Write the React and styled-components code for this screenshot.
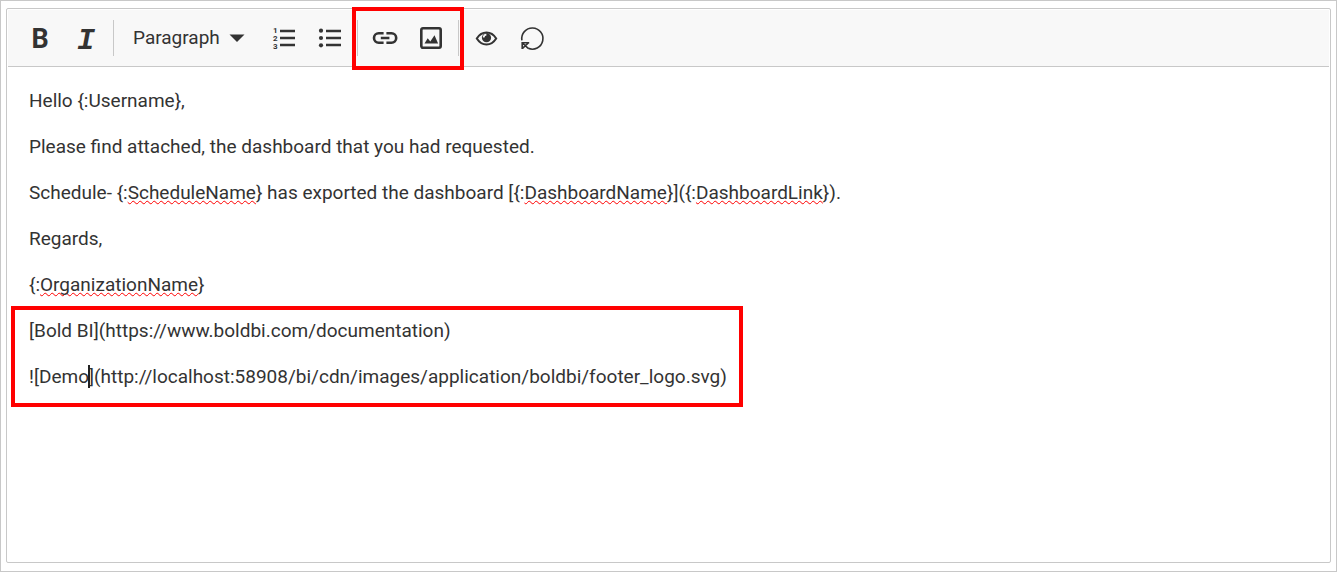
import React from "react";
import styled, { createGlobalStyle } from "styled-components";

const INK = "#333333";
const LINE = "#c8c8c8";

const GlobalStyle = createGlobalStyle`
  *, *::before, *::after { box-sizing: border-box; }
  body {
    margin: 0;
    background: #ffffff;
    color: ${INK};
    font: 19px/28px Roboto, "Liberation Sans", sans-serif;
  }
`;

const Page = styled.main`
  display: flex;
  min-height: 100vh;
  padding: 7px 5px 8px;
  border: 1px solid ${LINE};
`;

const Editor = styled.section`
  flex: 1;
  display: flex;
  flex-direction: column;
  min-width: 0;
  padding: 1px;
  border: 1px solid ${LINE};
  border-radius: 2px;
`;

const Toolbar = styled.div`
  display: flex;
  align-items: center;
  height: 57px;
  padding: 0 9px;
  background: #f8f8f8;
  border-bottom: 1px solid ${LINE};
`;

const ToolButton = styled.button`
  display: flex;
  align-items: center;
  justify-content: center;
  width: 46px;
  height: 46px;
  padding: 0;
  border: 0;
  background: transparent;
  color: ${INK};
  cursor: pointer;
`;

const Glyph = styled.span`
  padding-top: ${(p) => (p.$italic ? "5px" : "2px")};
  font: ${(p) =>
    p.$italic
      ? 'italic bold 30px/28px "Liberation Mono", monospace'
      : "bold 27px/28px Roboto, sans-serif"};
`;

const Separator = styled.span`
  flex: none;
  width: 1px;
  height: 36px;
  margin: 0 4px;
  background: ${LINE};
`;

const FormatField = styled.label`
  position: relative;
  display: flex;
  align-items: center;
  width: 143px;
  height: 46px;
`;

const FormatSelect = styled.select`
  appearance: none;
  width: 100%;
  height: 100%;
  padding: 0 0 0 15px;
  border: 0;
  background: transparent;
  color: ${INK};
  font: inherit;
`;

const SelectArrow = styled.svg`
  position: absolute;
  right: 16px;
  pointer-events: none;
`;

const Marked = styled.div`
  position: relative;
  display: flex;
  flex-direction: ${(p) => (p.$column ? "column" : "row")};
  gap: ${(p) => (p.$column ? "18px" : "0")};
  width: fit-content;

  &::after {
    content: "";
    position: absolute;
    inset: ${(p) => p.$outset};
    border: 4px solid #ff0000;
    pointer-events: none;
  }
`;

const Body = styled.div`
  flex: 1;
  display: flex;
  flex-direction: column;
  gap: 18px;
  padding: 20px 21px;
  outline: none;
`;

const Line = styled.p`
  margin: 0;
`;

const Misspelled = styled.span`
  text-decoration: underline wavy #ff0000 1px;
  text-decoration-skip-ink: none;
  text-underline-offset: 1px;
`;

const Caret = styled.span`
  position: relative;

  &::after {
    content: "";
    position: absolute;
    top: 0;
    left: -1px;
    width: 2px;
    height: 23px;
    background: #222222;
  }
`;

const Icon = ({ children, size = 28 }) => (
  <svg width={size} height={size} viewBox={`0 0 ${size} ${size}`} fill="none" stroke="currentColor" aria-hidden="true">
    {children}
  </svg>
);

const NumberedIcon = () => (
  <Icon>
    <path d="M10 7h15M10 14h15M10 21h15" strokeWidth="2.4" />
    <g fill="currentColor" stroke="none" fontFamily="Roboto, sans-serif" fontSize="8" fontWeight="bold">
      <text x="3" y="9">1</text>
      <text x="3" y="17">2</text>
      <text x="3" y="25">3</text>
    </g>
  </Icon>
);

const BulletIcon = () => (
  <Icon>
    <path d="M10 7h15M10 14h15M10 21h15" strokeWidth="2.4" />
    <g fill="currentColor" stroke="none">
      <circle cx="5" cy="6.7" r="2.1" />
      <circle cx="5" cy="14" r="2.1" />
      <circle cx="5" cy="21.3" r="2.1" />
    </g>
  </Icon>
);

const LinkIcon = () => (
  <Icon>
    <path d="M12.6 9.3H7.7a4.7 4.7 0 0 0 0 9.4h4.9M15.4 9.3h5.1a4.7 4.7 0 0 1 0 9.4h-5.1M9.8 14h8.6" strokeWidth="2.6" />
  </Icon>
);

const ImageIcon = () => (
  <Icon>
    <rect x="4.3" y="4.3" width="19.4" height="19.4" rx="1.6" strokeWidth="2.6" />
    <path d="M7.5 19.5l3.2-5.2 2.6 3.1 4.200-6.200 3.600 8.300z" fill="currentColor" stroke="none" />
  </Icon>
);

const EyeIcon = () => (
  <Icon>
    <path d="M4.8 14.5C7.3 10.5 10.7 8.5 14.5 8.5s7.200 2 9.700 6c-2.500 4-5.900 6-9.700 6s-7.200-2-9.700-6z" strokeWidth="2" />
    <circle cx="14.500" cy="13.700" r="4.600" fill="currentColor" stroke="none" />
    <path d="M11.700 13.600a2.900 2.900 0 0 1 2.700-2.900" stroke="#f8f8f8" strokeWidth="1.700" />
  </Icon>
);

const RefreshIcon = () => (
  <Icon>
    <path d="M3.900 16.300A10.600 10.600 0 1 1 10.200 24.300" strokeWidth="1.600" />
    <path d="M4.200 25v-6.300h7M4.500 19l5.700 5.300M4.500 24.400l5.800-5.400" strokeWidth="1.600" />
  </Icon>
);

export default function App() {
  return (
    <>
      <GlobalStyle />
      <Page>
        <Editor>
          <Toolbar role="toolbar" aria-label="Formatting">
            <ToolButton aria-label="Bold"><Glyph>B</Glyph></ToolButton>
            <ToolButton aria-label="Italic"><Glyph $italic>I</Glyph></ToolButton>
            <Separator />
            <FormatField>
              <FormatSelect aria-label="Text format" defaultValue="Paragraph">
                <option>Paragraph</option>
              </FormatSelect>
              <SelectArrow width="16" height="8" viewBox="0 0 16 8" aria-hidden="true">
                <path d="M0.500 0.500h15L8 8z" fill={INK} />
              </SelectArrow>
            </FormatField>
            <ToolButton aria-label="Numbered list"><NumberedIcon /></ToolButton>
            <ToolButton aria-label="Bulleted list"><BulletIcon /></ToolButton>
            <Separator />
            <Marked $outset="-8px -10px -9px">
              <ToolButton aria-label="Insert link"><LinkIcon /></ToolButton>
              <ToolButton aria-label="Insert image"><ImageIcon /></ToolButton>
            </Marked>
            <Separator />
            <ToolButton aria-label="Preview"><EyeIcon /></ToolButton>
            <ToolButton aria-label="Reset"><RefreshIcon /></ToolButton>
          </Toolbar>
          <Body role="textbox" aria-multiline="true" aria-label="Message" contentEditable suppressContentEditableWarning spellCheck={false}>
            <Line>Hello {"{:Username},"}</Line>
            <Line>Please find attached, the dashboard that you had requested.</Line>
            <Line>
              Schedule- {"{:"}<Misspelled>ScheduleName</Misspelled>{"} has exported the dashboard [{:"}
              <Misspelled>DashboardName</Misspelled>{"}]({:"}<Misspelled>DashboardLink</Misspelled>{"})."}
            </Line>
            <Line>Regards,</Line>
            <Line>{"{:"}<Misspelled>OrganizationName</Misspelled>{"}"}</Line>
            <Marked $column $outset="-11px -16px -16px -18px">
              <Line>[Bold BI](https://www.boldbi.com/documentation)</Line>
              <Line>![Demo<Caret />](http://localhost:58908/bi/cdn/images/application/boldbi/footer_logo.svg)</Line>
            </Marked>
          </Body>
        </Editor>
      </Page>
    </>
  );
}
